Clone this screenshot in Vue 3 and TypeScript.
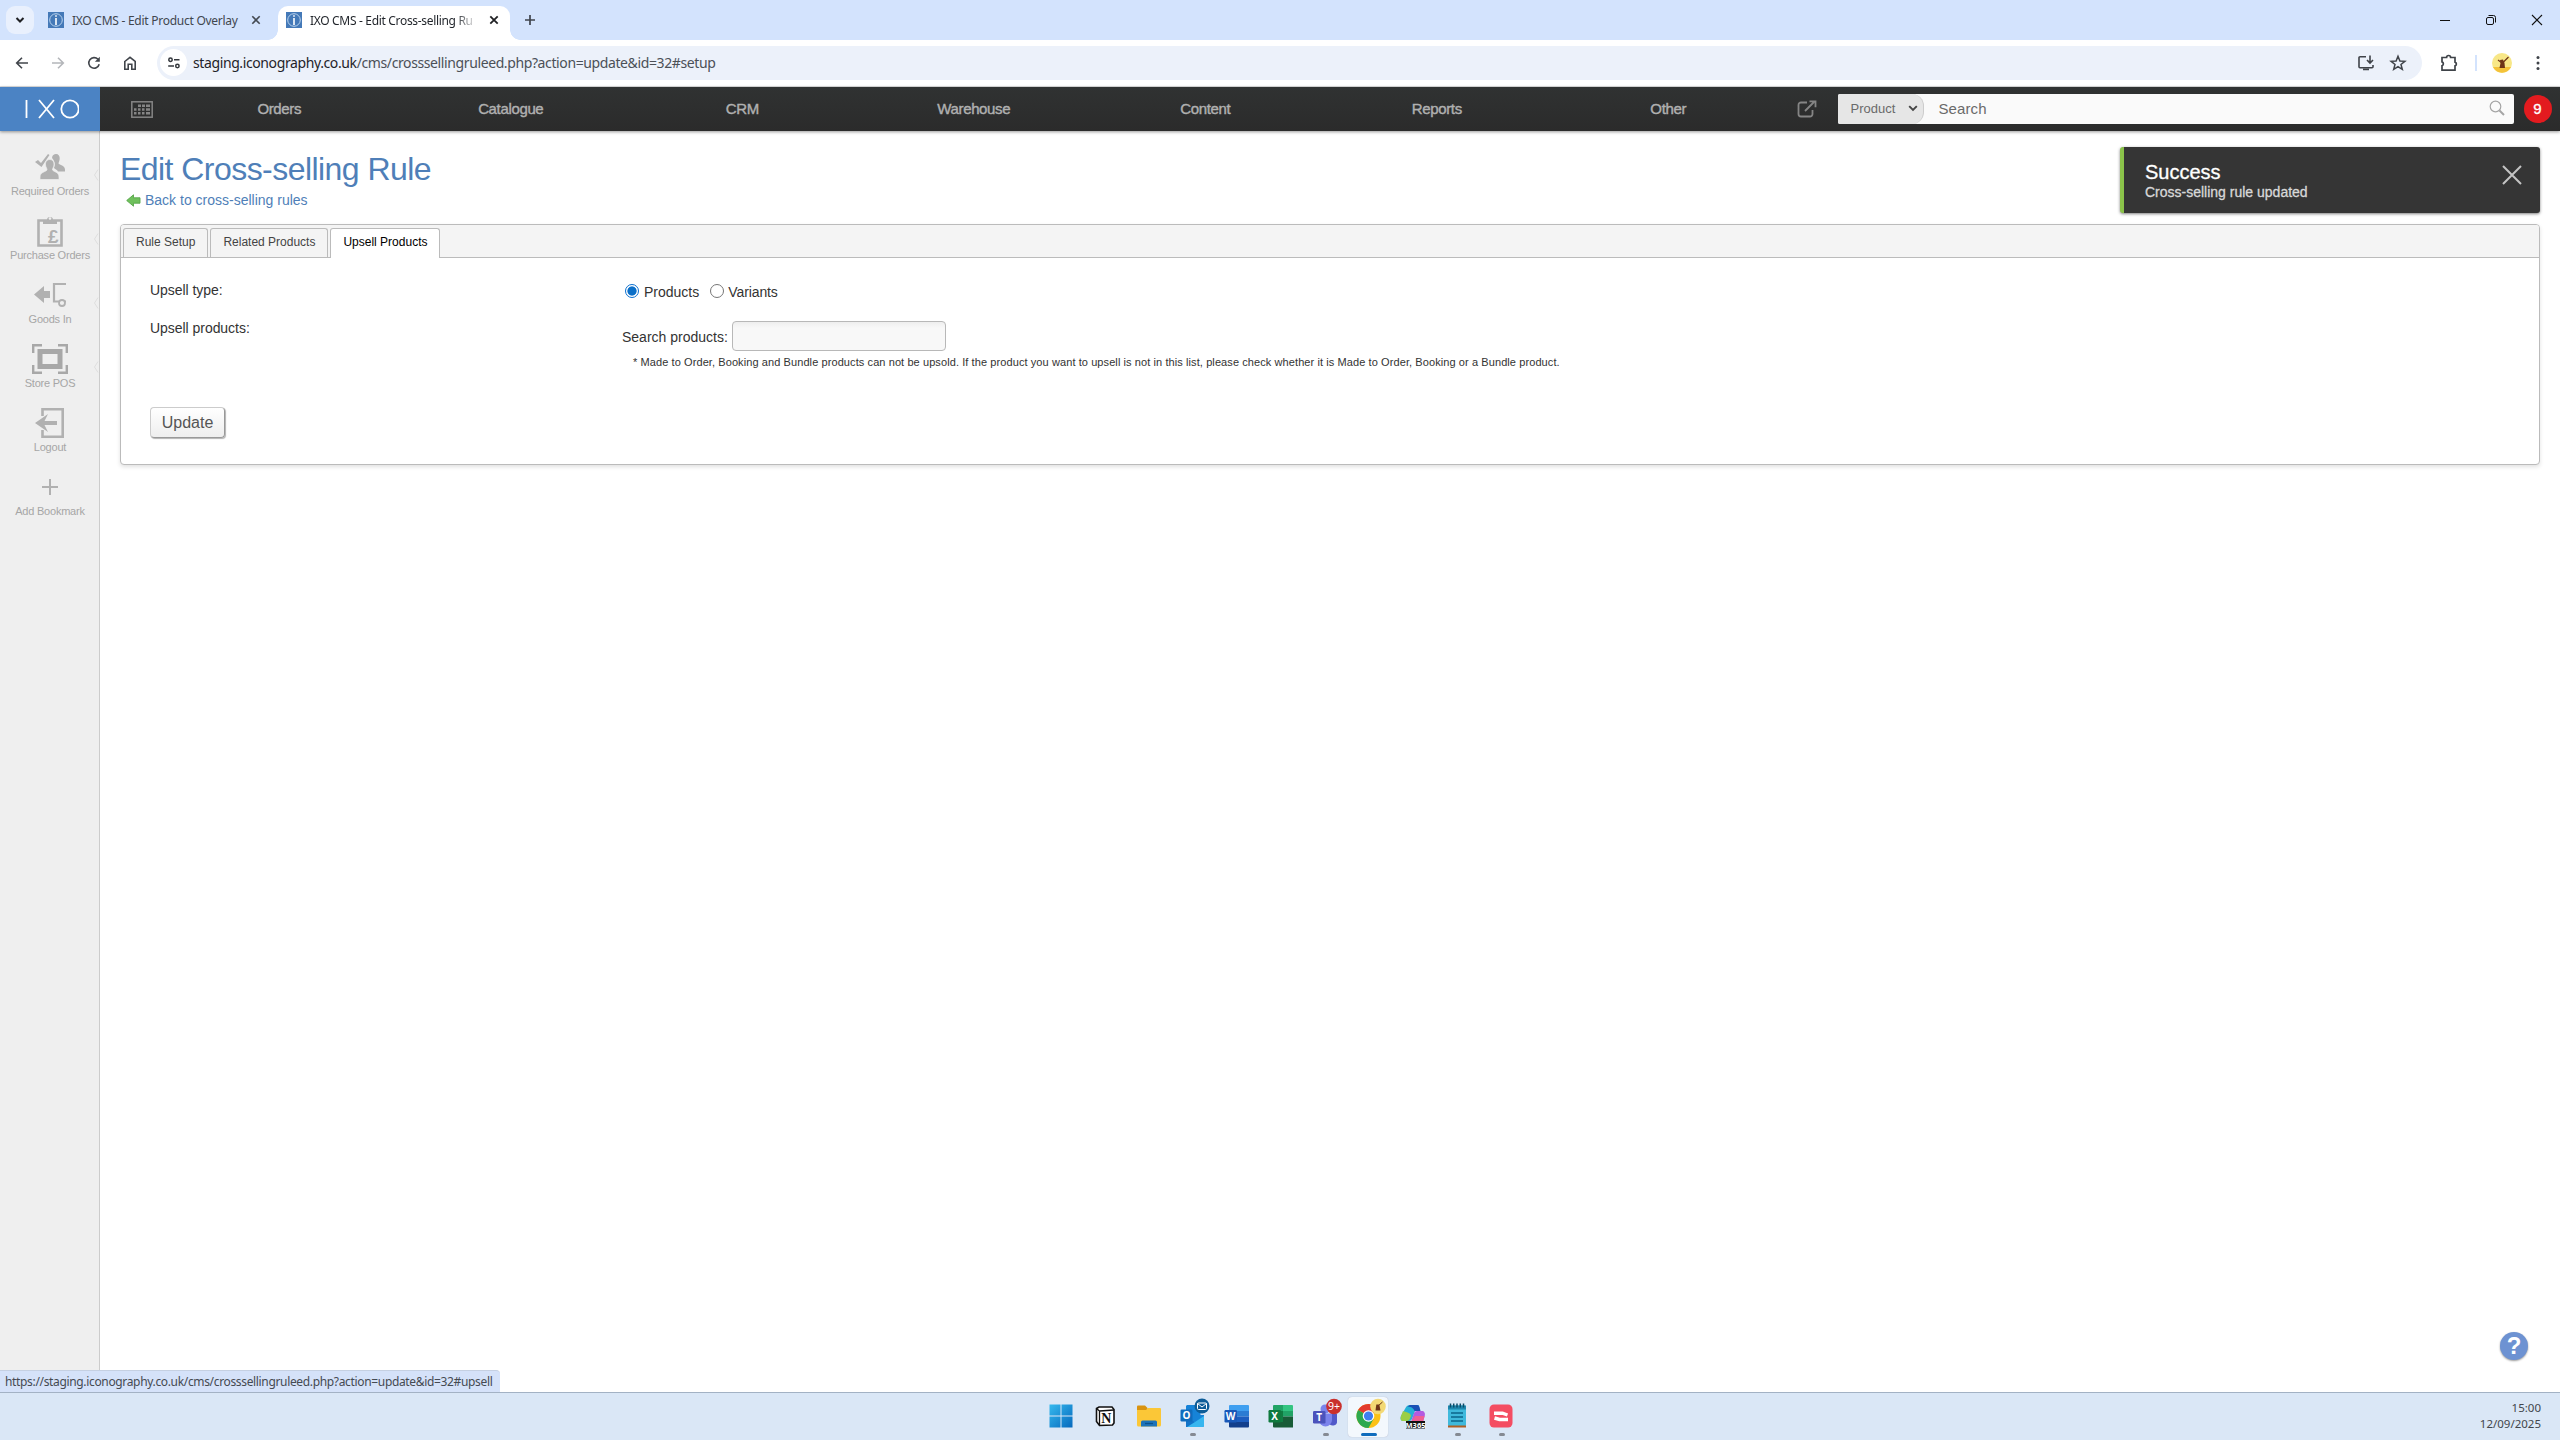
<script setup lang="ts">
interface Bookmark { label: string; icon: string; grip: boolean }

const menu: string[] = ['Orders', 'Catalogue', 'CRM', 'Warehouse', 'Content', 'Reports', 'Other']
const bookmarks: Bookmark[] = [
  { label: 'Required Orders', icon: 'people', grip: true },
  { label: 'Purchase Orders', icon: 'clipboard', grip: true },
  { label: 'Goods In', icon: 'goods', grip: true },
  { label: 'Store POS', icon: 'pos', grip: true },
  { label: 'Logout', icon: 'logout', grip: false },
  { label: 'Add Bookmark', icon: 'plus', grip: false },
]
const tabs: string[] = ['Rule Setup', 'Related Products', 'Upsell Products']
const activeTab = 'Upsell Products'
</script>

<template>
  <div class="screen">
    <header class="strip">
      <button class="tabmenu"><svg width="10" height="8" viewBox="0 0 10 8"><path d="M1.5 2 5 5.5 8.5 2" fill="none" stroke="#202124" stroke-width="2" /></svg></button>
      <div class="btab">
        <svg class="fav" viewBox="0 0 16 16"><rect width="16" height="16" fill="#4479b8" /><circle cx="8" cy="8" r="6.3" fill="none" stroke="#b9d3ee" stroke-width="1" /><path d="M8 3.2v1.6M8 6v7" stroke="#fff" stroke-width="1.6" /></svg>
        <span class="btitle">IXO CMS - Edit Product Overlay</span>
        <svg class="bx" viewBox="0 0 10 10"><path d="M1.3 1.3l7.4 7.4M8.7 1.3L1.3 8.7" stroke="#444a52" stroke-width="1.6" /></svg>
      </div>
      <div class="btab on">
        <svg class="fav" viewBox="0 0 16 16"><rect width="16" height="16" fill="#4479b8" /><circle cx="8" cy="8" r="6.3" fill="none" stroke="#b9d3ee" stroke-width="1" /><path d="M8 3.2v1.6M8 6v7" stroke="#fff" stroke-width="1.6" /></svg>
        <span class="btitle">IXO CMS - Edit Cross-selling Ru</span>
        <svg class="bx" viewBox="0 0 10 10"><path d="M1.3 1.3l7.4 7.4M8.7 1.3L1.3 8.7" stroke="#202124" stroke-width="1.8" /></svg>
      </div>
      <svg class="newtab" width="12" height="12" viewBox="0 0 12 12"><path d="M6 1v10M1 6h10" stroke="#3f444c" stroke-width="1.7" /></svg>
      <div class="wincontrols">
        <svg viewBox="0 0 12 12"><path d="M1 6.5h10" stroke="#111" /></svg>
        <svg viewBox="0 0 12 12"><rect x="1.5" y="3.5" width="7" height="7" rx="1.5" fill="none" stroke="#111" /><path d="M3.5 1.5h5a2 2 0 0 1 2 2v5" fill="none" stroke="#111" /></svg>
        <svg viewBox="0 0 12 12"><path d="M1 1l10 10M11 1L1 11" stroke="#111" stroke-width="1.1" /></svg>
      </div>
    </header>

    <div class="toolbar">
      <svg class="tb" viewBox="0 0 16 16"><path d="M14 8H3M8 2.7 2.7 8 8 13.3" fill="none" stroke="#41454b" stroke-width="1.6" /></svg>
      <svg class="tb" viewBox="0 0 16 16"><path d="M2 8h11M8 2.7 13.3 8 8 13.3" fill="none" stroke="#b4b6ba" stroke-width="1.6" /></svg>
      <svg class="tb" viewBox="0 0 16 16"><path d="M13.2 9.3A5.3 5.3 0 1 1 12 4.3" fill="none" stroke="#41454b" stroke-width="1.6" /><path d="M13.8 1.8v4.9H8.9z" fill="#41454b" /></svg>
      <svg class="tb" viewBox="0 0 16 16"><path d="M2.8 6.5 8 2.3l5.2 4.2v7.7H9.8V9.3H6.2v4.9H2.8z" fill="none" stroke="#41454b" stroke-width="1.6" /></svg>
      <div class="omni">
        <span class="siteinfo"><svg width="14" height="14" viewBox="0 0 14 14" fill="none" stroke="#33373c" stroke-width="1.5"><circle cx="3.5" cy="3.7" r="1.7" /><path d="M7 3.7h5.5M1.2 10H7" /><circle cx="10.4" cy="10" r="1.7" /></svg></span>
        <span class="url"><b>staging.iconography.co.uk</b>/cms/crosssellingruleed.php?action=update&amp;id=32#setup</span>
        <span class="omnicons">
          <svg viewBox="0 0 18 18" fill="none" stroke="#3f4349" stroke-width="1.6"><path d="M9 2.800H3a1 1 0 0 0-1 1v9a1 1 0 0 0 1 1h12a1 1 0 0 0 1-1V11M13 1.500v7M10 6l3 3 3-3M6 15.500h6" /></svg>
          <svg viewBox="0 0 18 18" fill="none" stroke="#3f4349" stroke-width="1.5"><path d="M9 2.300 10.900 7l5 .3-3.900 3.200 1.300 4.900L9 12.700l-4.300 2.700L6 10.500 2.100 7.300l5-.3z" /></svg>
        </span>
      </div>
      <svg class="puzzle" viewBox="0 0 20 20" fill="none" stroke="#3f4349" stroke-width="1.7"><path d="M3 4.500h4.600a2 2 0 0 1 4 0H16v4.600a2 2 0 0 1 0 3.800v4.300H3v-4.500a2 2 0 0 0 0-3.800z" /></svg>
      <span class="tdiv"></span>
      <svg class="avatar" viewBox="0 0 20 20"><circle cx="10" cy="10" r="10" fill="#f8e787" /><path d="M1 14a10 10 0 0 0 18 0z" fill="#f4c23a" /><path d="M8 7l3-.5 1.500 3.500L13 15H7.500L8.500 10z" fill="#6e3417" /><path d="M10.500 10l6-6M6 7l4 3" stroke="#6e3417" stroke-width="1.200" /></svg>
      <svg class="dots" width="4" height="16" viewBox="0 0 4 16" fill="#3f4349"><circle cx="2" cy="2.500" r="1.500" /><circle cx="2" cy="8" r="1.500" /><circle cx="2" cy="13.500" r="1.500" /></svg>
    </div>

    <nav class="nav">
      <div class="logo"><svg width="54" height="20" viewBox="0 0 54 20" fill="none" stroke="#fff" stroke-width="1.800"><path d="M1.500 1v18M14 1l15 18M29 1L14 19" /><circle cx="45" cy="10" r="8.700" /></svg></div>
      <svg class="kbd" width="22" height="17" viewBox="0 0 22 17"><rect x=".8" y=".8" width="20.400" height="15.400" fill="none" stroke="#858585" stroke-width="1.500" /><g fill="#858585"><path d="M7 3.500h3v2.500H7zM11 3.500h3v2.500h-3zM15 3.500h4v2.500h-4zM3 7.200h2.500v2.500H3zM7 7.200h2.500v2.500H7zM11 7.200h2.500v2.500H11zM15 7.200h4v2.500h-4zM3 11h2.500v2.500H3zM7 11h2.500v2.500H7zM11 11h2.500v2.500H11zM15 11h4v2.500h-4z" /></g></svg>
      <a v-for="m in menu" :key="m" class="mi">{{ m }}</a>
      <svg class="popout" width="20" height="18" viewBox="0 0 20 18" fill="none" stroke="#858585" stroke-width="1.800"><path d="M10 2.500H4a2.500 2.500 0 0 0-2.500 2.500v9A2.500 2.500 0 0 0 4 16.500h9a2.500 2.500 0 0 0 2.500-2.500v-4M8 11l9-9M12.500 1.300h6v6" /></svg>
      <div class="search">
        <span class="sel">Product<svg width="10" height="7" viewBox="0 0 10 7"><path d="M1.200 1.200 5 5l3.800-3.800" fill="none" stroke="#444" stroke-width="1.900" /></svg></span>
        <span class="ph">Search</span>
        <svg class="lens" width="16" height="16" viewBox="0 0 16 16" fill="none" stroke="#a5a5a5"><circle cx="6.500" cy="6.500" r="5.300" stroke-width="1.200" /><path d="M10.500 10.500l4.500 4.500" stroke-width="2" /></svg>
      </div>
      <span class="badge">9</span>
    </nav>

    <div class="work">
      <aside class="side">
        <div v-for="b in bookmarks" :key="b.label" class="bm">
          <div class="bmi">
            <svg v-if="b.icon === 'people'" width="30" height="28" viewBox="0 0 30 28" fill="#b1b1b1"><path d="M0 9l3-2 3 3 7-9 1.500 1L6.500 14z" /><path d="M17 5c.3-3 2-4 4-4 2.500 0 4 2 3.700 5-.2 2-1 3-1.200 4.500 1 1.500 6.500 2 6.500 6v2h-7c-1-2-3-2.500-4-3.500 1.500-3 1-7-2-10z" /><path d="M15 6.500c3 0 4.300 2.500 4 5.500-.2 2-1.500 3.300-1.500 5 1.500 2 6.500 2 6.500 7v2.500H5V24c0-5 5.500-5 7-7 0-1.700-1.300-3-1.500-5-.3-3 1-5.500 4.500-5.500z" stroke="#efefef" stroke-width=".7" /></svg>
            <svg v-else-if="b.icon === 'clipboard'" width="26" height="32" viewBox="0 0 26 32"><path d="M1.500 5.500h23v25h-23z" fill="none" stroke="#b1b1b1" stroke-width="2.600" /><path d="M6 9V5h4a3 3 0 0 1 6 0h4v4z" fill="#b1b1b1" /><circle cx="13" cy="3.500" r="1.300" fill="#efefef" /><text x="11" y="28" font-size="19" font-weight="700" fill="#b1b1b1">£</text></svg>
            <svg v-else-if="b.icon === 'goods'" width="32" height="26" viewBox="0 0 32 26"><path d="M0 12.500 10 4v5h6v7h-6v5z" fill="#b1b1b1" /><path d="M32 2H20v17.500h5M30.500 19.500H32" fill="none" stroke="#b1b1b1" stroke-width="2.200" /><circle cx="28" cy="21" r="3" fill="none" stroke="#b1b1b1" stroke-width="1.800" /></svg>
            <svg v-else-if="b.icon === 'pos'" width="36" height="30" viewBox="0 0 36 30" fill="none" stroke="#a8a8a8"><rect x="8" y="7.500" width="20" height="15" stroke-width="5" /><path d="M1.200 9V1.200H10M26 1.200h8.800V9M34.800 21v7.800H26M10 28.800H1.200V21" stroke-width="2.400" /></svg>
            <svg v-else-if="b.icon === 'logout'" width="30" height="30" viewBox="0 0 30 30"><path d="M7.500 8V1.300h20.200v27.400H7.500V22" fill="none" stroke="#b1b1b1" stroke-width="2.600" /><path d="M0 15 13 6l-3.500 7H22v4H9.500l3.500 7z" fill="#b1b1b1" /></svg>
            <svg v-else width="16" height="16" viewBox="0 0 16 16"><path d="M8 0v16M0 8h16" stroke="#b1b1b1" stroke-width="2" /></svg>
          </div>
          <span>{{ b.label }}</span>
          <svg v-if="b.grip" class="grip" width="6" height="12" viewBox="0 0 6 12"><path d="M5 .5 1.500 6 5 11.500" fill="none" stroke="#dedede" /></svg>
        </div>
      </aside>

      <main class="main">
        <h1>Edit Cross-selling Rule</h1>
        <a class="back"><svg width="15" height="13" viewBox="0 0 15 13"><path d="M.7 6.500 7.500.8v3H14v5.400H7.500v3z" fill="#6fc05c" stroke="#57a64a" stroke-width=".9" /></svg>Back to cross-selling rules</a>
        <section class="panel">
          <div class="tabs">
            <span v-for="t in tabs" :key="t" class="tab" :class="{ active: t === activeTab }">{{ t }}</span>
          </div>
          <div class="form">
            <div class="row first">
              <label>Upsell type:</label>
              <div class="radios"><i class="radio checked"></i><span class="prod">Products</span><i class="radio"></i><span class="vari">Variants</span></div>
            </div>
            <div class="row second">
              <label>Upsell products:</label>
              <div class="find">
                <div class="findline"><span>Search products:</span><input type="text" /></div>
                <p>* Made to Order, Booking and Bundle products can not be upsold. If the product you want to upsell is not in this list, please check whether it is Made to Order, Booking or a Bundle product.</p>
              </div>
            </div>
            <button class="update">Update</button>
          </div>
        </section>
      </main>

      <div class="toast">
        <div><strong>Success</strong><span>Cross-selling rule updated</span></div>
        <svg width="20" height="20" viewBox="0 0 20 20"><path d="M1 1l18 18M19 1L1 19" stroke="#c4c4c4" stroke-width="2" /></svg>
      </div>
      <div class="help">?</div>
      <div class="status">https://staging.iconography.co.uk/cms/crosssellingruleed.php?action=update&amp;id=32#upsell</div>
    </div>

    <footer class="taskbar">
      <div class="apps">
        <span class="app"><svg viewBox="0 0 32 32"><defs><linearGradient id="win" x1="0" y1="0" x2="1" y2="1"><stop offset="0" stop-color="#35b9ee" /><stop offset="1" stop-color="#0669bd" /></linearGradient></defs><path d="M4.500 4.500h11v11h-11zM16.500 4.500h11v11h-11zM4.500 16.500h11v11h-11zM16.500 16.500h11v11h-11z" fill="url(#win)" /></svg></span>
        <span class="app"><svg viewBox="0 0 32 32"><path d="M7.500 8.500 10 7h13l2 2.500V23l-1.500 2-13 .5-3-4z" fill="#fff" stroke="#111" stroke-width="1.600" /><path d="M7.500 8.500l3 2.500v14M10.500 11 25 10" fill="none" stroke="#111" stroke-width="1.300" /><text x="12.300" y="23" font-size="14" font-weight="700" font-family="Liberation Serif, serif" fill="#111">N</text></svg></span>
        <span class="app"><svg viewBox="0 0 32 32"><path d="M4 6.500a1 1 0 0 1 1-1h7l2.500 2.500v4H4z" fill="#d9930f" /><path d="M4 10h9l2-2h12a1 1 0 0 1 1 1v16a1.500 1.500 0 0 1-1.500 1.500h-21A1.500 1.500 0 0 1 4 25z" fill="#fbc737" /><path d="M8 26.500V22a1.500 1.500 0 0 1 1.500-1.500h13A1.500 1.500 0 0 1 24 22v4.500z" fill="#1c72b8" /><path d="M12 23.500h8" stroke="#0b4f8a" stroke-width="1.300" /></svg></span>
        <span class="app run"><svg viewBox="0 0 32 32"><path d="M10 5h12a1.500 1.500 0 0 1 1.500 1.500V15H27v10.500a1.500 1.500 0 0 1-1.500 1.500h-15A1.500 1.500 0 0 1 9 25.500V6z" fill="#1683d8" /><path d="M9 16l9 6 9-6v9.500a1.500 1.500 0 0 1-1.500 1.500h-15A1.500 1.500 0 0 1 9 25.500z" fill="#37b6ef" /><path d="M9 16l9 6-8 5H9z" fill="#1173c8" /><rect x="3.500" y="9.500" width="12" height="12" rx="1.200" fill="#0f6cbd" /><text x="9.500" y="19" font-size="10" font-weight="700" text-anchor="middle" fill="#fff">O</text><circle cx="25" cy="6" r="7.500" fill="#0d5c97" /><rect x="20.500" y="3" width="9" height="6.500" rx="1" fill="none" stroke="#fff" /><path d="M20.500 3.500 25 7l4.500-3.500" fill="none" stroke="#fff" /></svg></span>
        <span class="app"><svg viewBox="0 0 32 32"><path d="M9 5h18a1 1 0 0 1 1 1v5H8V6a1 1 0 0 1 1-1z" fill="#3f9ff0" /><path d="M8 11h20v5.500H8z" fill="#2b7cd3" /><path d="M8 16.500h20V22H8z" fill="#1c5dbf" /><path d="M8 22h20v4.500a1 1 0 0 1-1 1H9a1 1 0 0 1-1-1z" fill="#123f8c" /><rect x="3.500" y="10" width="12.500" height="12.500" rx="1.200" fill="#1858b8" /><text x="9.700" y="20" font-size="10" font-weight="700" text-anchor="middle" fill="#fff">W</text></svg></span>
        <span class="app"><svg viewBox="0 0 32 32"><path d="M9 5h9v6H8V6a1 1 0 0 1 1-1z" fill="#21a366" /><path d="M18 5h9a1 1 0 0 1 1 1v5H18z" fill="#33c481" /><path d="M8 11h10v11H8z" fill="#107c41" /><path d="M18 11h10v5.500H18z" fill="#21a366" /><path d="M18 16.500h10v11H9a1 1 0 0 1-1-1V22h10z" fill="#185c37" /><rect x="3.500" y="10" width="12.500" height="12.500" rx="1.200" fill="#0f7a3e" /><text x="9.700" y="20" font-size="10" font-weight="700" text-anchor="middle" fill="#fff">X</text></svg></span>
        <span class="app run"><svg viewBox="0 0 32 32"><circle cx="16" cy="9" r="4.500" fill="#7b83eb" /><circle cx="24" cy="11" r="3" fill="#5059c9" /><path d="M20 14h8v7a4 4 0 0 1-8 1z" fill="#5059c9" /><path d="M10 13.500h13V20a6.500 6.500 0 0 1-13 0z" fill="#7b83eb" /><rect x="4" y="11" width="12.500" height="12.500" rx="1.200" fill="#4b53bc" /><text x="10.200" y="21" font-size="10" font-weight="700" text-anchor="middle" fill="#fff">T</text><circle cx="25" cy="6.500" r="7.800" fill="#c9302c" /><text x="25" y="10.300" font-size="10.500" text-anchor="middle" fill="#fff">9+</text></svg></span>
        <span class="app cur"><svg viewBox="0 0 32 32"><circle cx="15.500" cy="16" r="12" fill="#fbc116" /><path d="M15.500 16 5.100 10A12 12 0 0 1 25.900 10z" fill="#e33b2e" /><path d="M15.500 16 5.100 10A12 12 0 0 0 15.500 28l5-9z" fill="#2da94f" /><circle cx="15.500" cy="16" r="5.800" fill="#fff" /><circle cx="15.500" cy="16" r="4.600" fill="#3f7ff0" /><circle cx="25" cy="6.500" r="7.800" fill="#f3d974" /><path d="M23.300 4.500h3l1.200 6h-5z" fill="#6e3417" /><path d="M25 6l4.500-4" stroke="#6e3417" /></svg></span>
        <span class="app"><svg viewBox="0 0 32 32"><path d="M13 5h9l-4 6-3 8a3 3 0 0 1-3 2H6c-2 0-3-2-2-5l4.500-8A5 5 0 0 1 13 5z" fill="#25b0d6" /><path d="M4 16l2-5c3 1 8 2 8 5l-1.500 3.500a3 3 0 0 1-2.500 1.500H6c-2 0-3-2-2-5z" fill="#9bce45" /><path d="M13 5h7a2.500 2.500 0 0 1 2.500 2l1 4h-6c-1-3-3-4-7-4.500z" fill="#1a4fb5" /><path d="M20 11h5c2 0 3.500 2 2.700 5L26 22H14l3-9a4 4 0 0 1 3-2z" fill="#b35be0" /><path d="M18 16h9.500L26 22H14z" fill="#ef5f93" /><rect x="9" y="21" width="19" height="7.500" fill="#111" /><text x="18.500" y="27.500" font-size="7.500" font-weight="700" text-anchor="middle" fill="#fff">M365</text></svg></span>
        <span class="app run"><svg viewBox="0 0 32 32"><rect x="7" y="5.500" width="18" height="21" rx="1.500" fill="#3fb9dc" /><path d="M7 5.500h18v4H7z" fill="#1d86ad" /><path d="M9.500 3.500v4M12.700 3.500v4M16 3.500v4M19.300 3.500v4M22.500 3.500v4" stroke="#0b4b68" stroke-width="1.500" /><path d="M10 13h12M10 17h12M10 21h12" stroke="#0d668b" stroke-width="1.500" /><path d="M7 25.500h18v2H7z" fill="#b05f24" /></svg></span>
        <span class="app run"><svg viewBox="0 0 32 32"><rect x="4.500" y="4.500" width="23" height="23" rx="4.500" fill="#f44d62" /><path d="M9 13.200h6l2.500 0L22.500 15M9.500 18l5 1.500h8.500" fill="none" stroke="#fff" stroke-width="3.400" /></svg></span>
      </div>
      <div class="clock"><span>15:00</span><span>12/09/2025</span></div>
    </footer>
  </div>
</template>

<style>
body { margin: 0; }
</style>

<style scoped>
* { box-sizing: border-box; }
.screen { width: 2560px; height: 1440px; overflow: hidden; display: flex; flex-direction: column; background: #fff; font-family: "Liberation Sans", Arial, sans-serif; color: #333; }
svg { display: block; flex: none; }

.strip { height: 40px; flex: none; background: #d3e3fd; display: flex; align-items: center; padding-left: 6px; font-family: "Noto Sans", sans-serif; }
.tabmenu { width: 28px; height: 28px; border: 0; border-radius: 9px; background: #e9f0fd; display: flex; align-items: center; justify-content: center; padding: 0; }
.btab { height: 34px; display: flex; align-items: center; padding: 0 11px 6px 8px; margin-top: 6px; width: 232px; border-radius: 10px 10px 0 0; position: relative; color: #41464e; }
.btab:not(.on) { margin-left: 6px; }
.btab.on { background: #fff; color: #1f2329; margin-left: 6px; }
.btab.on::before, .btab.on::after { content: ""; position: absolute; bottom: 0; width: 10px; height: 10px; }
.btab.on::before { left: -10px; background: radial-gradient(circle at 0 0, transparent 9.500px, #fff 10px); }
.btab.on::after { right: -10px; background: radial-gradient(circle at 100% 0, transparent 9.500px, #fff 10px); }
.fav { width: 16px; height: 16px; margin-right: 8px; }
.btitle { width: 169px; overflow: hidden; white-space: nowrap; font-size: 12px; letter-spacing: -0.26px; line-height: 18px; padding-top: 1px; }
.on .btitle { letter-spacing: -0.32px; -webkit-mask-image: linear-gradient(90deg, #000 145px, transparent 168px); mask-image: linear-gradient(90deg, #000 145px, transparent 168px); }
.bx { width: 10px; height: 10px; margin-left: 10px; }
.newtab { margin-left: 14px; }
.wincontrols { margin-left: auto; display: flex; gap: 34px; padding-right: 17px; }
.wincontrols svg { width: 12px; height: 12px; }

.toolbar { height: 47px; flex: none; display: flex; align-items: center; background: #fff; padding: 0 20px 1px 14px; border-bottom: 1px solid #dfdfdf; }
.tb { width: 16px; height: 16px; margin-right: 20px; }
.omni { height: 34px; width: 2265px; margin-left: -1px; border-radius: 17px; background: #ecf1fa; display: flex; align-items: center; padding-left: 3px; }
.siteinfo { width: 27px; height: 27px; border-radius: 50%; background: #fff; display: flex; align-items: center; justify-content: center; }
.url { margin-left: 6px; font: 14px "Noto Sans", sans-serif; color: #4b5057; letter-spacing: -0.39px; white-space: nowrap; }
.url b { font-weight: 400; color: #1f2329; }
.omnicons { margin-left: auto; display: flex; gap: 14px; padding-right: 15px; }
.omnicons svg { width: 18px; height: 18px; }
.puzzle { width: 20px; height: 20px; margin-left: 17px; }
.tdiv { width: 2px; height: 16px; background: #d3e3fd; margin-left: 16px; }
.avatar { width: 20px; height: 20px; margin-left: 15px; }
.dots { margin-left: auto; }

.nav { height: 44px; flex: none; display: flex; align-items: center; background: linear-gradient(#303232, #2b2b2b); box-shadow: 0 1px 3px rgba(0,0,0,.4); position: relative; z-index: 2; }
.logo { width: 100px; height: 44px; background: #4b83c4; display: flex; align-items: center; justify-content: center; padding: 0 0 1px 3px; }
.kbd { margin: 0 10px 0 31px; }
.mi { width: 231.500px; padding: 0 0 2px 1px; text-align: center; font-size: 15px; letter-spacing: -0.35px; color: #b0b0b0; -webkit-text-stroke: .4px #b0b0b0; }
.popout { margin-left: 13px; }
.search { margin-left: 21px; width: 676px; height: 30px; border-radius: 2px; background: #fafafa; display: flex; align-items: center; padding-right: 9px; color: #6a6a6a; margin-bottom: 1px; }
.sel { width: 86px; height: 30px; padding-left: 13px; border-radius: 2px 12px 12px 2px; background: #e6e6e6; border-right: 1px solid #ccc; display: flex; align-items: center; gap: 13px; font-size: 13px; }
.ph { flex: 1; padding-left: 15px; font-size: 15px; letter-spacing: .1px; }
.lens { margin-bottom: 1px; }
.badge { width: 28px; height: 28px; border-radius: 50%; margin-left: 10px; background: #e31b1f; color: #fff; font-size: 15px; line-height: 28px; text-align: center; -webkit-text-stroke: .3px #fff; }

.work { flex: 1; min-height: 0; display: flex; position: relative; }
.side { width: 100px; flex: none; background: #efefef; border-right: 1px solid #ccc; padding-top: 18px; }
.bm { height: 64px; display: flex; flex-direction: column; align-items: center; position: relative; font-size: 11px; letter-spacing: -0.22px; color: #a6a6a6; line-height: 14px; padding-left: 1px; white-space: nowrap; }
.bmi { height: 36px; display: flex; align-items: center; }
.bm span { margin-top: -1px; }
.grip { position: absolute; right: 0; top: 20px; }

.main { flex: 1; padding: 0 20px; }
h1 { margin: 18px 0 0 0; font-size: 32px; line-height: 40px; font-weight: 400; letter-spacing: -0.55px; color: #4f7fb8; }
.back { display: flex; align-items: center; gap: 4px; margin: 3px 0 0 6px; font-size: 14px; line-height: 16px; color: #4f7fb8; }
.panel { margin-top: 16px; height: 241px; border: 1px solid #bbb; border-radius: 4px; box-shadow: 0 2px 4px rgba(0,0,0,.12); background: #fff; overflow: hidden; }
.tabs { height: 33px; background: #f4f4f4; border-bottom: 1px solid #bbb; display: flex; gap: 2px; padding: 3px 0 0 2px; }
.tab { height: 29px; border: 1px solid #bbb; border-bottom: 0; border-radius: 3px 3px 0 0; padding: 0 12px; font-size: 12px; line-height: 27px; color: #444; white-space: nowrap; }
.tab.active { height: 30px; background: #fff; color: #000; }
.form { padding: 0 30px 0 29px; font-size: 14px; }
.row { display: flex; }
.row label { width: 472px; flex: none; line-height: 16px; letter-spacing: -0.04px; }
.first { height: 47px; padding-top: 24px; }
.second { height: 103px; padding-top: 15px; }
.radios { display: flex; align-items: center; height: 20px; padding-left: 3px; }
.radio { width: 14px; height: 14px; border-radius: 50%; border: 1px solid #767676; background: #fff; margin-right: 4px; margin-top: -3px; }
.radio.checked { margin-right: 5px; border-color: #0b6fd0; background: radial-gradient(circle, #0b6fc8 4.200px, #fff 5px); }
.prod { margin-right: 11px; }
.vari { letter-spacing: -0.1px; }
.find { padding-top: 1px; }
.findline { display: flex; align-items: center; gap: 4px; }
.findline span { padding-top: 2px; }
.findline input { width: 214px; height: 30px; border: 1px solid #b8b8b8; border-radius: 4px; background: linear-gradient(#eee, #f8f8f8 6px); padding: 0; }
.find p { margin: 4px 0 0 11px; font-size: 11px; line-height: 14px; letter-spacing: .089px; white-space: nowrap; }
.update { display: block; width: 75px; height: 31px; margin-top: -1px; padding: 0; font: 16px "Liberation Sans", Arial, sans-serif; color: #555; border: 1px solid #ccc; border-right-color: #999; border-bottom-color: #999; border-radius: 4px; background: linear-gradient(#fff, #eee); box-shadow: 1px 1px 1px rgba(0,0,0,.3); }

.toast { position: absolute; left: 2120px; top: 16px; width: 420px; height: 66px; background: #353535; border-left: 4px solid #8bc34a; border-radius: 3px; box-shadow: 0 1px 3px rgba(0,0,0,.5); display: flex; align-items: flex-start; justify-content: space-between; padding: 13px 18px 0 21px; color: #fff; }
.toast strong { display: block; font-size: 20px; font-weight: 400; line-height: 24px; -webkit-text-stroke: .3px #fff; }
.toast span { display: block; font-size: 14px; line-height: 16px; color: #d8d8d8; -webkit-text-stroke: .3px #d8d8d8; }
.toast svg { margin-top: 5px; }
.help { position: absolute; left: 2500px; top: 1201px; width: 28px; height: 28px; border-radius: 50%; background: #6d92d2; box-shadow: 0 1px 2px rgba(0,0,0,.4); color: #fff; font-weight: 700; font-size: 24px; line-height: 28px; text-align: center; }
.status { position: absolute; left: 0; bottom: 0; width: 500px; height: 22px; border-radius: 0 4px 0 0; background: #d5e2f9; border-top: 1px solid #c5d0e2; padding-left: 5px; font: 12px/22px "Noto Sans", sans-serif; letter-spacing: -0.34px; color: #454a52; white-space: nowrap; }

.taskbar { height: 48px; flex: none; background: #dae7f6; border-top: 1px solid #a3b2c4; position: relative; display: flex; align-items: center; justify-content: space-between; font-family: "Noto Sans", sans-serif; }
.apps { display: flex; margin-left: 1039px; gap: 4px; }
.app { width: 40px; height: 40px; border-radius: 4px; display: flex; justify-content: center; padding-top: 3px; position: relative; margin-right: .1px; }
.app svg { width: 32px; height: 32px; overflow: visible; margin-left: 3px; }
.run::after, .cur::after { content: ""; position: absolute; bottom: 1px; left: 19px; width: 6px; height: 3px; border-radius: 2px; background: #858a92; }
.cur { background: #f3f8fd; box-shadow: 0 0 1px #aab; }
.cur::after { left: 13px; width: 16px; background: #0f6cbd; }
.clock { display: flex; flex-direction: column; align-items: flex-end; padding: 0 19px 1px 0; font-size: 11.500px; line-height: 16px; color: #42464c; }
</style>
